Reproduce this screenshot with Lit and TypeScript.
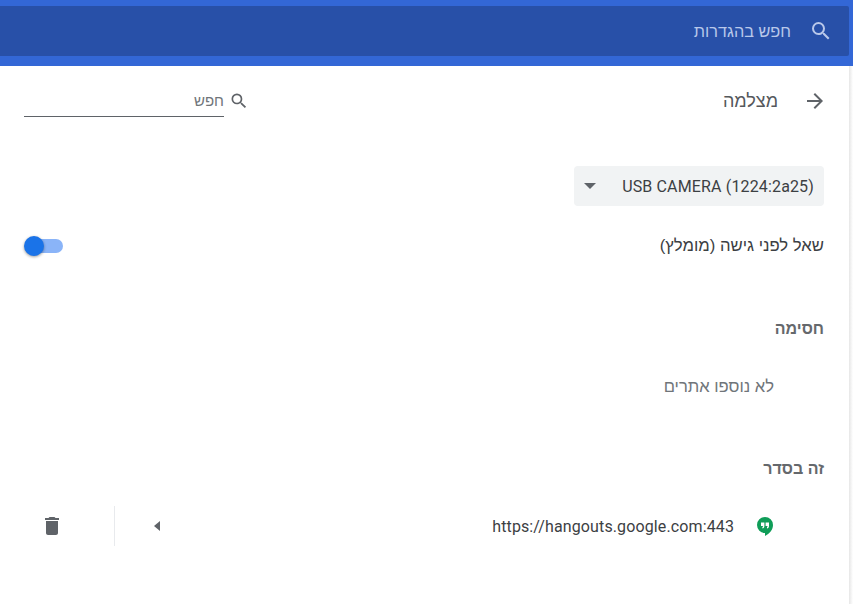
import { LitElement, html, css } from "lit";
import { customElement } from "lit/decorators.js";

const search = (size: number) => html`<svg class="glass" width=${size} height=${size} viewBox="0 0 24 24" fill="currentColor"><path d="M15.500 14h-.79l-.28-.27A6.470 6.470 0 0 0 16 9.500 6.500 6.500 0 1 0 9.500 16c1.610 0 3.090-.59 4.230-1.570l.27.28v.79l5 4.990L20.490 19l-4.990-5zm-6 0C7.010 14 5 11.990 5 9.500S7.010 5 9.500 5 14 7.010 14 9.500 11.990 14 9.500 14z"/></svg>`;

@customElement("app-root")
export class AppRoot extends LitElement {
  static styles = css`
    :host { display: block; width: 853px; height: 604px; overflow: hidden; background: #fff; font-family: "Liberation Sans", sans-serif; font-size: 16px; color: #3c4043; }
    .glass { display: block; }
    .page { direction: rtl; display: flex; flex-direction: column; height: 604px; }
    .top { height: 66px; box-sizing: border-box; padding: 6px 4px 10px 0; background: #3367d6; flex: none; }
    .topbar { height: 50px; background: #2850a8; border-top-right-radius: 2px; border-bottom-right-radius: 2px; display: flex; align-items: center; padding-right: 16px; gap: 18px; color: #b9c8ea; font-size: 16.3px; }
    .body { flex: 1; display: flex; flex-direction: column; padding: 0 29px; position: relative; }
    .edge { position: absolute; top: 0; bottom: 0; right: 0; width: 4px; background: linear-gradient(to left, #fff, #e6e6e6); }
    .head { display: flex; align-items: center; height: 70px; }
    .back { color: #5f6368; display: block; margin-left: 25px; margin-right: -3px; }
    .title { font-size: 18px; color: #55585c; flex: 1; }
    .find { display: flex; align-items: center; margin-left: -5px; width: 225px; }
    .findbox { width: 200px; height: 32px; box-sizing: border-box; border-bottom: 1px solid #5f6368; font-size: 15px; color: #70757a; display: flex; align-items: center; margin-right: 5px; }
    .findicon { color: #5f6368; display: block; }
    .select { margin-top: 30px; width: 250px; height: 40px; background: #f1f3f4; border-radius: 4px; display: flex; align-items: center; justify-content: space-between; box-sizing: border-box; padding: 0 10px; direction: ltr; flex-direction: row-reverse; color: #3c4043; font-family: Roboto, sans-serif; font-size: 16px; letter-spacing: .15px; }
    .arrow { width: 0; height: 0; border-left: 6.500px solid transparent; border-right: 6.500px solid transparent; border-top: 6px solid #5f6368; }
    .ask { margin-top: 20px; height: 40px; display: flex; align-items: center; justify-content: space-between; margin-left: -2px; font-size: 16.7px; }
    .toggle { position: relative; width: 36px; height: 14px; border-radius: 7px; background: #8ab4f8; }
    .knob { position: absolute; left: -3px; top: -3px; width: 20px; height: 20px; border-radius: 50%; background: #1a73e8; box-shadow: 0 1px 3px rgba(0,0,0,.4); }
    .sec { font-weight: 700; color: #65686c; font-size: 16px; line-height: 20px; }
    .blocked { margin-top: 53px; }
    .allowed { margin-top: 62px; }
    .none { color: #70757a; font-size: 16.6px; line-height: 20px; margin-right: 50px; margin-top: 38px; }
    .row { display: flex; align-items: center; height: 40px; margin-top: 27px; margin-left: -5px; }
    .favicon { display: block; margin-right: 50px; margin-left: 22px; flex: none; }
    .url { direction: ltr; flex: 1; text-align: right; color: #3c4043; font-family: Roboto, sans-serif; font-size: 16px; letter-spacing: .12px; }
    .tri { margin-left: 39px; width: 0; height: 0; border-top: 5px solid transparent; border-bottom: 5px solid transparent; border-right: 6px solid #5f6368; }
    .rule { width: 1px; height: 40px; background: #e8eaed; }
    .trash { display: block; color: #5f6368; margin: 0 50px 0 16px; }
  `;

  render() {
    return html`<div class="page">
      <div class="top"><div class="topbar">${search(24)}<span>חפש בהגדרות</span></div></div>
      <div class="body">
        <div class="edge"></div>
        <div class="head">
          <svg class="back" width="24" height="24" viewBox="0 0 24 24" fill="currentColor"><path d="M12 4l-1.410 1.410L16.170 11H4v2h12.170l-5.580 5.590L12 20l8-8z"/></svg>
          <div class="title">מצלמה</div>
          <div class="find"><span class="findicon">${search(20)}</span><div class="findbox">חפש</div></div>
        </div>
        <div class="select"><span>USB CAMERA (1224:2a25)</span><span class="arrow"></span></div>
        <div class="ask"><span>שאל לפני גישה (מומלץ)</span><div class="toggle"><div class="knob"></div></div></div>
        <div class="sec blocked">חסימה</div>
        <div class="none">לא נוספו אתרים</div>
        <div class="sec allowed">זה בסדר</div>
        <div class="row">
          <svg class="favicon" width="18" height="20" viewBox="0 0 18 20"><path fill="#0f9d58" d="M9 1a8 8 0 0 0-8 8 8 8 0 0 0 8 8v3c4.500-2.200 8-6 8-11a8 8 0 0 0-8-8z"/><path fill="#fff" d="M5 6.500h3.400v3.400c0 1.300-.8 2.300-2 2.600v-1.500c.4-.2.600-.5.600-1.100H5zM9.600 6.500H13v3.400c0 1.300-.8 2.300-2 2.600v-1.500c.4-.2.600-.5.600-1.100H9.600z"/></svg>
          <div class="url">https://hangouts.google.com:443</div>
          <div class="tri"></div>
          <div class="rule"></div>
          <svg class="trash" width="24" height="24" viewBox="0 0 24 24" fill="currentColor"><path d="M6 19c0 1.100.9 2 2 2h8c1.100 0 2-.9 2-2V7H6v12zM19 4h-3.500l-1-1h-5l-1 1H5v2h14V4z"/></svg>
        </div>
      </div>
    </div>`;
  }
}
